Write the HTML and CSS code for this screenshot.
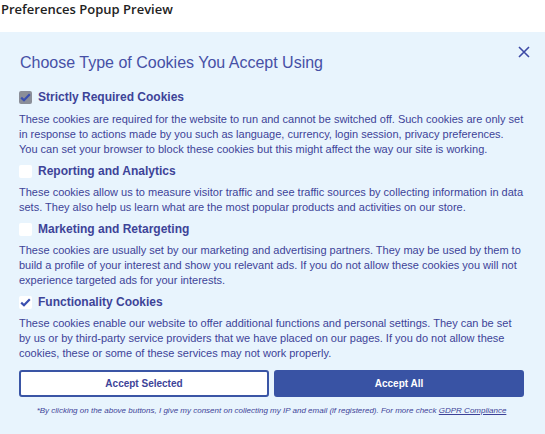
FILE: index.html
```html
<!DOCTYPE html>
<html>
<head>
<meta charset="utf-8">
<link rel="stylesheet" href="styles.css">
</head>
<body>
<div class="page-title">Preferences Popup Preview</div>
<div class="popup">
  <div class="head">
    <h2 class="heading">Choose Type of Cookies You Accept Using</h2>
    <span class="close">
      <svg width="12" height="12" viewBox="0 0 12 12"><path d="M1 1L11 11M11 1L1 11" stroke="#3d4aa6" stroke-width="1.6" fill="none"/></svg>
    </span>
  </div>
  <div class="section">
    <div class="label-row">
      <span class="box box-disabled"><svg width="11" height="9" viewBox="0 0 11 9"><path d="M1.2 4.6L4 7.3L9.8 1.3" stroke="#3a4fb0" stroke-width="2.2" fill="none"/></svg></span>
      <span class="label">Strictly Required Cookies</span>
    </div>
    <p class="desc">These cookies are required for the website to run and cannot be switched off. Such cookies are only set in response to actions made by you such as language, currency, login session, privacy preferences. You can set your browser to block these cookies but this might affect the way our site is working.</p>
  </div>
  <div class="section">
    <div class="label-row">
      <span class="box"></span>
      <span class="label">Reporting and Analytics</span>
    </div>
    <p class="desc">These cookies allow us to measure visitor traffic and see traffic sources by collecting information in data sets. They also help us learn what are the most popular products and activities on our store.</p>
  </div>
  <div class="section">
    <div class="label-row">
      <span class="box"></span>
      <span class="label">Marketing and Retargeting</span>
    </div>
    <p class="desc">These cookies are usually set by our marketing and advertising partners. They may be used by them to build a profile of your interest and show you relevant ads. If you do not allow these cookies you will not experience targeted ads for your interests.</p>
  </div>
  <div class="section">
    <div class="label-row">
      <span class="box"><svg width="11" height="9" viewBox="0 0 11 9"><path d="M1.2 4.6L4 7.3L9.8 1.3" stroke="#3a4fb0" stroke-width="2.2" fill="none"/></svg></span>
      <span class="label">Functionality Cookies</span>
    </div>
    <p class="desc">These cookies enable our website to offer additional functions and personal settings. They can be set by us or by third-party service providers that we have placed on our pages. If you do not allow these cookies, these or some of these services may not work properly.</p>
  </div>
  <div class="buttons">
    <button class="btn btn-outline">Accept Selected</button>
    <button class="btn btn-fill">Accept All</button>
  </div>
  <p class="note">*By clicking on the above buttons, I give my consent on collecting my IP and email (if registered). For more check <a class="link">GDPR Compliance</a></p>
</div>
</body>
</html>
```
FILE: styles.css
```css
html, body {
  margin: 0;
  padding: 0;
  background: #ffffff;
}
body {
  font-family: "Liberation Sans", Arial, sans-serif;
}
.page-title {
  font-family: "Open Sans", sans-serif;
  font-size: 13px;
  font-weight: 600;
  color: #222222;
  height: 32px;
  line-height: 18px;
  padding-left: 1px;
}
.popup {
  background: #e8f4fd;
  padding: 19px 21px 0 19px;
  height: 402px;
  box-sizing: border-box;
  color: #3d4398;
}
.head {
  display: flex;
  justify-content: space-between;
  align-items: flex-start;
  padding-left: 1px;
}
.heading {
  margin: 0;
  font-size: 16px;
  font-weight: normal;
  line-height: 24px;
  color: #4650a6;
}
.close {
  display: flex;
  margin-top: -5px;
  margin-right: -6px;
}
.label-row {
  display: flex;
  align-items: center;
  gap: 6px;
  height: 18px;
}
.head + .section .label-row {
  margin-top: 13px;
}
.box {
  width: 13px;
  height: 13px;
  background: #ffffff;
  border-radius: 2px;
  display: flex;
  align-items: center;
  justify-content: center;
}
.box-disabled {
  background: #8b8e98;
}
.label {
  font-size: 12px;
  font-weight: bold;
  color: #3d4398;
}
.desc {
  margin: 5px 0 5px 0;
  font-size: 11px;
  line-height: 15px;
  color: #3d4398;
}
.head + .section .desc {
  margin-top: 6px;
}
.buttons {
  display: flex;
  gap: 5px;
  margin-top: 9px;
}
.btn {
  flex: 1;
  height: 27px;
  border-radius: 3px;
  font-family: "Liberation Sans", Arial, sans-serif;
  font-size: 10px;
  font-weight: bold;
  cursor: pointer;
}
.btn-outline {
  background: #ffffff;
  border: 2px solid #3a55a5;
  color: #3d4398;
}
.btn-fill {
  background: #3953a4;
  border: 2px solid #3953a4;
  color: #ffffff;
}
.note {
  margin: 9px 0 0 0;
  text-align: center;
  font-size: 8px;
  font-style: italic;
  color: #3d4398;
}
.link {
  text-decoration: underline;
}
```
